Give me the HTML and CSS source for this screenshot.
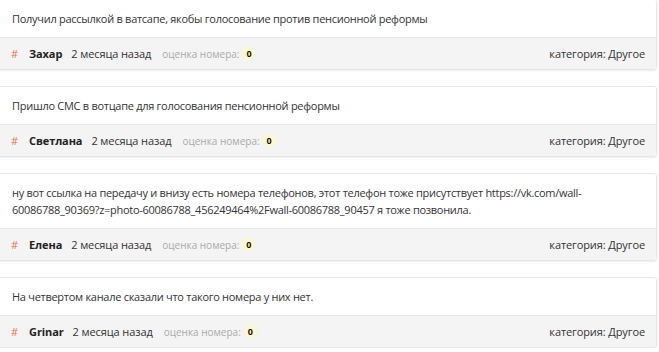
FILE: index.html
```html
<!DOCTYPE html>
<html lang="ru">
<head>
    <meta charset="UTF-8">
    <title>Комментарии</title>
    <link rel="stylesheet" href="styles.css">
</head>
<body>
    <div class="comments">
        <div class="comment">
            <div class="comment-text">Получил рассылкой в ватсапе, якобы голосование против пенсионной реформы</div>
            <div class="comment-meta">
                <span class="hash">#</span>
                <span class="author">Захар</span>
                <span class="date">2 месяца назад</span>
                <span class="rating">оценка номера: <span class="score">0</span></span>
                <span class="category">категория: Другое</span>
            </div>
        </div>

        <div class="comment">
            <div class="comment-text">Пришло СМС в вотцапе для голосования пенсионной реформы</div>
            <div class="comment-meta">
                <span class="hash">#</span>
                <span class="author">Светлана</span>
                <span class="date">2 месяца назад</span>
                <span class="rating">оценка номера: <span class="score">0</span></span>
                <span class="category">категория: Другое</span>
            </div>
        </div>

        <div class="comment">
            <div class="comment-text">ну вот ссылка на передачу и внизу есть номера телефонов, этот телефон тоже присутствует https://vk.com/wall-<wbr>60086788_90369?z=photo-60086788_456249464%2Fwall-60086788_90457 я тоже позвонила.</div>
            <div class="comment-meta">
                <span class="hash">#</span>
                <span class="author">Елена</span>
                <span class="date">2 месяца назад</span>
                <span class="rating">оценка номера: <span class="score">0</span></span>
                <span class="category">категория: Другое</span>
            </div>
        </div>

        <div class="comment">
            <div class="comment-text">На четвертом канале сказали что такого номера у них нет.</div>
            <div class="comment-meta">
                <span class="hash">#</span>
                <span class="author">Grinar</span>
                <span class="date">2 месяца назад</span>
                <span class="rating">оценка номера: <span class="score">0</span></span>
                <span class="category">категория: Другое</span>
            </div>
        </div>
    </div>
</body>
</html>
```

FILE: styles.css
```css
* {
    margin: 0;
    padding: 0;
    box-sizing: border-box;
}

body {
    font-family: 'Open Sans', 'Noto Sans', sans-serif;
    font-size: 11px;
    letter-spacing: -0.28px;
    color: #333;
    background: white;
}

.comments {
    margin: -1px 2px 0 -4px;
    display: flex;
    flex-direction: column;
    gap: 16px;
}

.comment {
    border: 1px solid #e6e6e6;
    border-radius: 3px;
    box-shadow: 0 1px 2px rgba(0,0,0,0.08);
    overflow: hidden;
}

.comment-text {
    padding: 10px 15px;
    line-height: 17px;
    background: white;
}

.comment-meta {
    display: flex;
    align-items: center;
    height: 32px;
    padding: 0 11px 0 14px;
    background: #f4f4f4;
    border-top: 1px solid #e6e6e6;
    letter-spacing: -0.1px;
}

.hash {
    color: #f0714a;
    margin-right: 11px;
}

.author {
    font-weight: bold;
    color: #222;
    margin-right: 9px;
}

.date {
    margin-right: 11px;
}

.rating {
    color: #aaa;
    font-size: 10px;
    letter-spacing: 0;
    display: flex;
    align-items: center;
}

.score {
    display: inline-flex;
    align-items: center;
    justify-content: center;
    width: 13px;
    height: 13px;
    margin-left: 3px;
    border-radius: 50%;
    background: #fdf8cf;
    box-shadow: 0 0 1px #f6eda8;
    color: #111;
    font-weight: bold;
    font-size: 9px;
}

.category {
    margin-left: auto;
}
```
